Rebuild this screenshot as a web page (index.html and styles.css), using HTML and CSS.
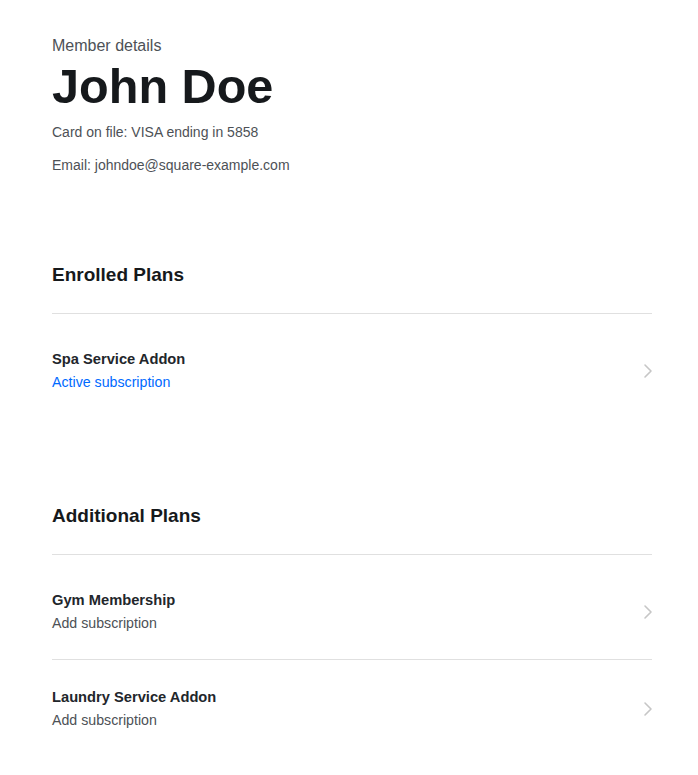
FILE: index.html
```html
<!DOCTYPE html>
<html>
<head>
<meta charset="utf-8">
<link rel="stylesheet" href="styles.css">
</head>
<body>
<main class="page">
  <header class="member">
    <div class="eyebrow">Member details</div>
    <h1 class="name">John Doe</h1>
    <p class="meta">Card on file: VISA ending in 5858</p>
    <p class="meta">Email: johndoe@square-example.com</p>
  </header>

  <section class="plans enrolled">
    <h2 class="plans-title">Enrolled Plans</h2>
    <ul class="list">
      <li class="row">
        <div class="row-text">
          <div class="row-title">Spa Service Addon</div>
          <div class="row-sub active">Active subscription</div>
        </div>
        <svg class="chev" width="10" height="16" viewBox="0 0 10 16"><path d="M2 2 L8 8 L2 14" fill="none" stroke="#c6c6c6" stroke-width="1.6" stroke-linecap="round" stroke-linejoin="round"/></svg>
      </li>
    </ul>
  </section>

  <section class="plans additional">
    <h2 class="plans-title">Additional Plans</h2>
    <ul class="list">
      <li class="row">
        <div class="row-text">
          <div class="row-title">Gym Membership</div>
          <div class="row-sub">Add subscription</div>
        </div>
        <svg class="chev" width="10" height="16" viewBox="0 0 10 16"><path d="M2 2 L8 8 L2 14" fill="none" stroke="#c6c6c6" stroke-width="1.6" stroke-linecap="round" stroke-linejoin="round"/></svg>
      </li>
      <li class="row">
        <div class="row-text">
          <div class="row-title">Laundry Service Addon</div>
          <div class="row-sub">Add subscription</div>
        </div>
        <svg class="chev" width="10" height="16" viewBox="0 0 10 16"><path d="M2 2 L8 8 L2 14" fill="none" stroke="#c6c6c6" stroke-width="1.6" stroke-linecap="round" stroke-linejoin="round"/></svg>
      </li>
    </ul>
  </section>
</main>
</body>
</html>
```
FILE: styles.css
```css
* { box-sizing: border-box; }
html, body { margin: 0; padding: 0; background: #fff; }
body {
  font-family: "Liberation Sans", Arial, Helvetica, sans-serif;
  color: #1a1c1e;
}
.page {
  width: 600px;
  margin-left: 52px;
  padding-top: 36px;
}
.eyebrow {
  font-size: 16px;
  line-height: 20px;
  color: #4d5156;
}
.name {
  margin: 2px 0 0;
  font-size: 48.6px;
  line-height: 56px;
  font-weight: 700;
  color: #16191c;
}
.meta {
  margin: 8px 0 0;
  font-size: 14px;
  line-height: 20px;
  color: #4d5156;
}
.meta + .meta { margin-top: 13px; }
.plans { margin-top: 88px; }
.plans.additional { margin-top: 86px; }
.plans-title {
  margin: 0;
  font-size: 19px;
  line-height: 24px;
  font-weight: 700;
  color: #16191c;
  padding-bottom: 26px;
  border-bottom: 1px solid #e0e0e0;
}
.list { list-style: none; margin: 0; padding: 0; }
.row {
  display: flex;
  align-items: center;
  justify-content: space-between;
  padding: 35px 0 26px;
}
.row + .row { border-top: 1px solid #e0e0e0; padding-top: 27px; }
.row-title {
  font-size: 14.7px;
  line-height: 20px;
  font-weight: 700;
  color: #22262b;
}
.row-sub {
  margin-top: 3px;
  font-size: 14.2px;
  line-height: 20px;
  color: #4d5156;
}
.row-sub.active { color: #006aff; }
.chev { display: block; margin-right: -1px; margin-top: 0; }
```
